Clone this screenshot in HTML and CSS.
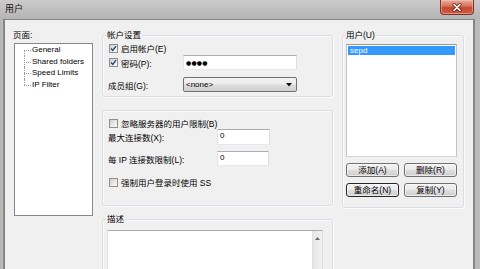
FILE: index.html
```html
<!DOCTYPE html>
<html lang="zh-CN">
<head>
<meta charset="utf-8">
<title>用户</title>
<link rel="stylesheet" href="styles.css">
</head>
<body>
<div class="window">
  <div class="titlebar">
    <span class="title">用户</span>
    <button class="close" aria-label="关闭">
      <svg width="12" height="9" viewBox="0 0 12 9"><path d="M3 1.5 L9 7.5 M9 1.5 L3 7.5" stroke="#6b2418" stroke-width="3.2" stroke-linecap="round"/><path d="M3 1.5 L9 7.5 M9 1.5 L3 7.5" stroke="#ffffff" stroke-width="1.7" stroke-linecap="round"/></svg>
    </button>
  </div>
  <div class="client">
    <div class="col-pages">
      <div class="caption">页面:</div>
      <div class="tree">
        <ul>
          <li>General</li>
          <li>Shared folders</li>
          <li>Speed Limits</li>
          <li>IP Filter</li>
        </ul>
      </div>
    </div>

    <div class="col-main">
      <section class="group g-account">
        <div class="legend">帐户设置</div>
        <div class="row r-a1"><span class="cb"><svg width="7" height="7" viewBox="0 0 7 7"><path d="M1 3.6 L2.8 5.4 L6 1.2" fill="none" stroke="#2d4470" stroke-width="1.4"/></svg></span><span>启用帐户(E)</span></div>
        <div class="row r-a2"><span class="lbl w75"><span class="cb"><svg width="7" height="7" viewBox="0 0 7 7"><path d="M1 3.6 L2.8 5.4 L6 1.2" fill="none" stroke="#2d4470" stroke-width="1.4"/></svg></span>密码(P):</span><div class="input pass">●●●●</div></div>
        <div class="row r-a3"><span class="lbl w75">成员组(G):</span><div class="select"><span>&lt;none&gt;</span><svg width="6" height="4" viewBox="0 0 6 4"><path d="M0 0 H6 L3 3.5 Z" fill="#111"/></svg></div></div>
      </section>

      <section class="group g-limits">
        <div class="row r-b1"><span class="cb"></span><span>忽略服务器的用户限制(B)</span></div>
        <div class="row r-b2"><span class="lbl w109">最大连接数(X):</span><div class="input num">0</div></div>
        <div class="row r-b3"><span class="lbl w109">每 IP 连接数限制(L):</span><div class="input num n2">0</div></div>
        <div class="row r-b4"><span class="cb"></span><span>强制用户登录时使用 SS</span></div>
      </section>

      <section class="group g-desc">
        <div class="legend">描述</div>
        <div class="memo">
          <div class="memo-body"></div>
          <div class="vscroll"><svg width="5" height="3" viewBox="0 0 5 3"><path d="M0 3 L2.5 0 L5 3 Z" fill="#6a6a6a"/></svg></div>
        </div>
      </section>
    </div>

    <div class="col-users">
      <section class="group g-users">
        <div class="legend">用户(U)</div>
        <div class="listbox">
          <div class="item selected">sepd</div>
        </div>
        <div class="buttons">
          <button class="btn">添加(A)</button>
          <button class="btn">删除(R)</button>
          <button class="btn default">重命名(N)</button>
          <button class="btn">复制(Y)</button>
        </div>
      </section>
    </div>
  </div>
</div>
</body>
</html>
```

FILE: styles.css
```css
* { box-sizing: border-box; }

html, body { margin: 0; padding: 0; }

body {
  width: 480px;
  height: 269px;
  overflow: hidden;
  font-family: "Liberation Sans", "Noto Sans CJK SC", sans-serif;
  font-size: 8.5px;
  color: #000;
  background: #bcbcbc;
}

.window {
  height: 269px;
  display: flex;
  flex-direction: column;
  padding: 0 5px 0 3px;
  background: linear-gradient(to right, #b2b2b2 0, #c2c2c2 3px, #c4c4c4 60%, #bababa 100%);
}

.titlebar {
  flex: none;
  height: 19px;
  margin: 0 -5px 0 -3px;
  padding-left: 5px;
  display: flex;
  align-items: flex-start;
  justify-content: space-between;
  background: linear-gradient(to bottom, #cbcbcb, #bdbdbd 60%, #b6b6b6);
}

.title {
  font-size: 9px;
  line-height: 18px;
  color: #111;
}

.close {
  width: 34px;
  height: 15px;
  margin-right: 6px;
  padding: 0;
  border: 1px solid #7a3326;
  border-top: 0;
  border-radius: 0 0 4px 4px;
  background: linear-gradient(to bottom, #e9ab9c 0%, #d97a64 40%, #c5472e 55%, #cf5e42 100%);
  display: flex;
  align-items: center;
  justify-content: center;
  box-shadow: inset 0 0 0 1px rgba(255, 210, 200, 0.45);
}

.client {
  flex: 1;
  min-height: 0;
  overflow: hidden;
  background: #f0f0f0;
  border: solid #858585;
  border-width: 1px 2px 0 2px;
  display: grid;
  grid-template-columns: 79px 231px 122px;
  column-gap: 9px;
  align-items: start;
  padding: 10px 0 0 9px;
}

/* ---------- pages tree ---------- */
.caption {
  line-height: 10px;
  height: 10px;
  margin-left: -1px;
}

.tree {
  margin-top: 3px;
  height: 173px;
  background: #fff;
  border: 1px solid #828790;
}

.tree ul {
  list-style: none;
  margin: 0;
  padding: 0 0 0 17px;
  font-family: "Liberation Sans", sans-serif;
  font-size: 8px;
}

.tree li {
  position: relative;
  height: 11.7px;
  line-height: 11.7px;
  white-space: nowrap;
}

.tree li::before {
  content: "";
  position: absolute;
  left: -8px;
  top: 50%;
  width: 7px;
  border-top: 1px dotted #9a9a9a;
}

.tree li::after {
  content: "";
  position: absolute;
  left: -8px;
  top: 0;
  bottom: 0;
  border-left: 1px dotted #9a9a9a;
}

.tree li:first-child::after { top: 50%; }
.tree li:last-child::after { bottom: 50%; }

/* ---------- group boxes ---------- */
.group {
  border: 1px solid #d5dfe5;
  border-radius: 3px;
  box-shadow: inset 1px 1px 0 #fbfbfb, 1px 1px 0 #fbfbfb;
  display: flex;
  flex-direction: column;
  align-items: flex-start;
}

.legend {
  margin-top: -6px;
  margin-left: -2px;
  padding: 0 1px;
  height: 11px;
  line-height: 11px;
  background: #f0f0f0;
  white-space: nowrap;
}

.row {
  display: flex;
  align-items: center;
  white-space: nowrap;
}

.lbl {
  flex: none;
  display: flex;
  align-items: center;
}

.w75 { width: 75px; }
.w109 { width: 109px; }

.cb {
  flex: none;
  width: 9px;
  height: 9px;
  margin: 0 3px 0 1px;
  border: 1px solid #8e8f8f;
  background: linear-gradient(135deg, #cdcdcd 0%, #e9e9e9 55%, #fafafa 100%);
  display: flex;
  align-items: center;
  justify-content: center;
}

.input {
  height: 100%;
  background: #fff;
  border: 1px solid;
  border-color: #abadb3 #dbdfe6 #e3e9ef #e2e3ea;
  padding-left: 2px;
  display: flex;
  align-items: center;
  font-size: 8px;
}

.pass {
  width: 114px;
  font-family: "DejaVu Sans", sans-serif;
  font-size: 6px;
  letter-spacing: 0.2px;
}

.num { width: 53px; padding-top: 0; align-items: flex-start; line-height: 12px; }
.n2 { width: 52px; }

.select {
  width: 114px;
  height: 100%;
  border: 1px solid #707070;
  border-radius: 2px;
  background: linear-gradient(to bottom, #f3f3f3 0%, #ebebeb 48%, #dedede 52%, #d0d0d0 100%);
  display: flex;
  align-items: center;
  justify-content: space-between;
  padding: 0 4px 0 2px;
  font-size: 8px;
}

/* account group */
.g-account {
  margin-top: 5px;
  padding: 0 0 4px 5px;
}
.r-a1 { height: 12px; margin-top: 1px; }
.r-a2 { height: 15px; margin-top: 1px; }
.r-a3 { height: 15px; margin-top: 7px; }

/* limits group */
.g-limits {
  margin-top: 13px;
  padding: 6px 0 17px 5px;
}
.r-b1 { height: 12px; }
.r-b2 { height: 16px; }
.r-b3 { height: 15px; margin-top: 6px; }
.r-b4 { height: 12px; margin-top: 10px; }

/* description group */
.g-desc {
  margin-top: 13px;
  padding: 0 0 0 4px;
}
.g-desc .legend { margin-left: -1px; }

.memo {
  margin-top: 5px;
  width: 216px;
  height: 50px;
  display: flex;
  background: #fff;
  border: 1px solid;
  border-color: #abadb3 #dbdfe6 #e3e9ef #e2e3ea;
}
.memo-body { flex: 1; }
.vscroll {
  width: 10px;
  background: linear-gradient(to right, #e6e6e6, #f0f0f0);
  border-left: 1px solid #e0e0e0;
  display: flex;
  justify-content: center;
  align-items: flex-start;
  padding-top: 6px;
}

/* users group */
.g-users {
  margin-top: 5px;
  padding: 0 6px 10px 3px;
}
.g-users .legend { margin-left: -1px; }

.listbox {
  margin-top: 3px;
  width: 111px;
  height: 113px;
  background: #fff;
  border: 1px solid;
  border-color: #9a9a9a #c3c3c3 #d6d6d6 #c3c3c3;
  padding: 1px;
}

.item {
  height: 9px;
  line-height: 9px;
  padding-left: 2px;
  font-size: 8px;
}
.item.selected {
  background: #3399ff;
  color: #fff;
}

.buttons {
  margin-top: 6px;
  display: grid;
  grid-template-columns: 53px 53px;
  column-gap: 5px;
  row-gap: 6px;
}

.btn {
  height: 14px;
  padding: 0;
  font: inherit;
  line-height: 12px;
  color: #000;
  border: 1px solid #707070;
  border-radius: 3px;
  background: linear-gradient(to bottom, #f2f2f2 0%, #ebebeb 45%, #dddddd 52%, #cfcfcf 100%);
  box-shadow: inset 0 0 0 1px rgba(255, 255, 255, 0.55);
  white-space: nowrap;
}

.btn.default {
  border-color: #262626;
}
```
